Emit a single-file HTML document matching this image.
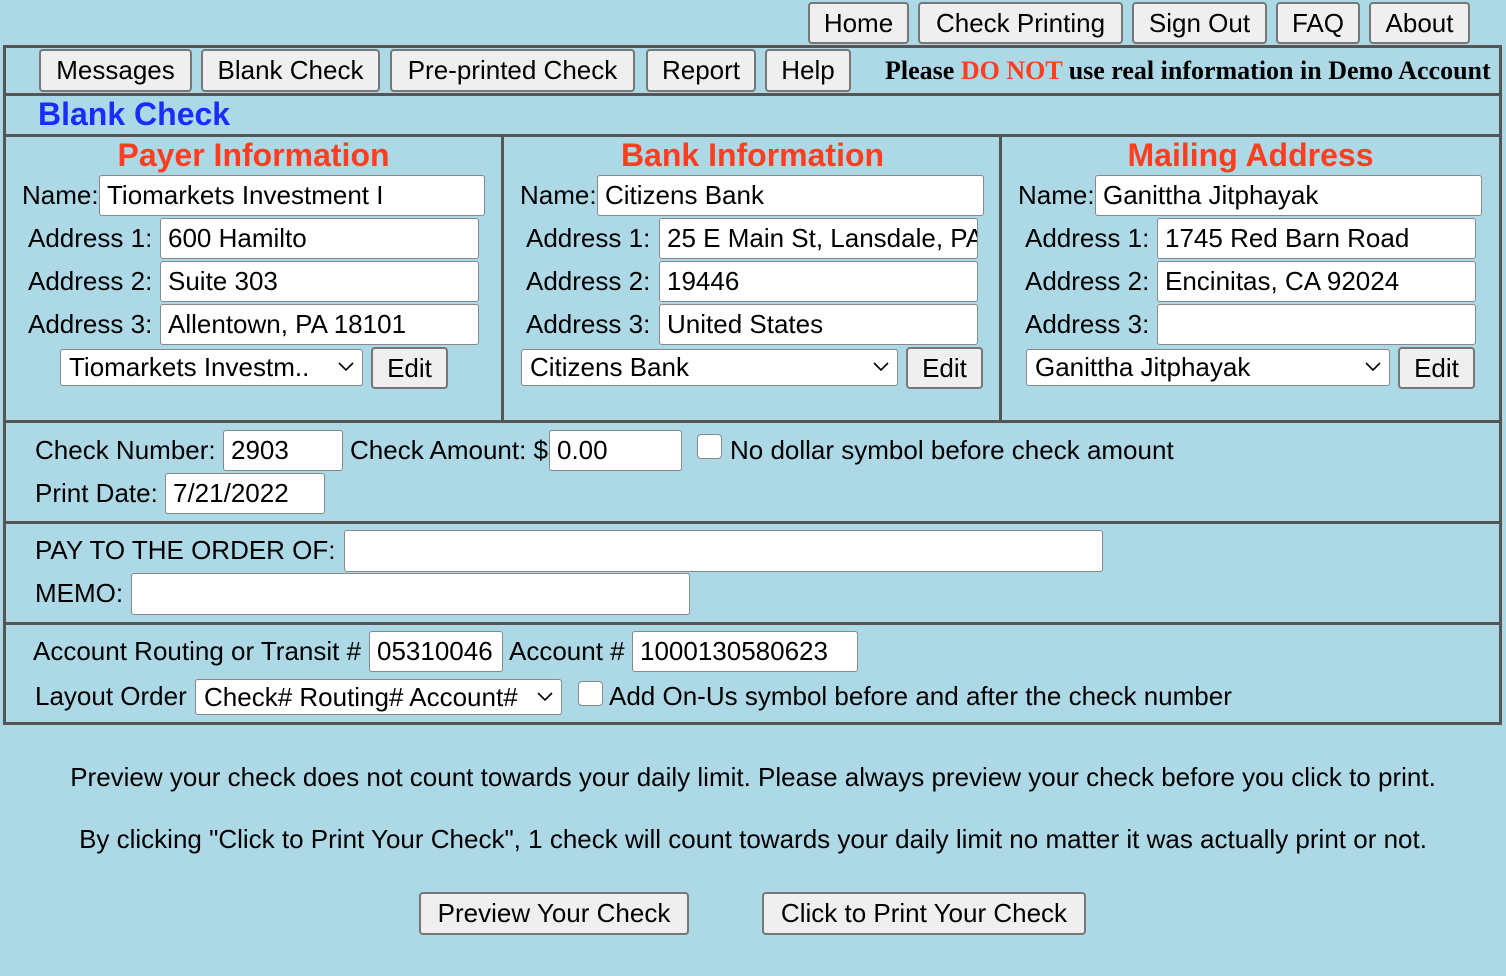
<!DOCTYPE html>
<html><head><meta charset="utf-8"><style>
*{box-sizing:border-box;margin:0;padding:0}
body{width:1506px;height:976px;background:#add8e6;font-family:"Liberation Sans",Arial,sans-serif;font-size:26px;color:#000;position:relative;overflow:hidden}
.a{position:absolute;white-space:nowrap}
.btn{position:absolute;background:#efefef;border:2px solid #777;border-radius:4px;display:flex;align-items:center;justify-content:center;font-size:26px}
.in{position:absolute;background:#fff;border:1px solid #888;border-radius:3px;height:41px;padding-left:7px;line-height:39px;overflow:hidden;white-space:nowrap}
.sel{position:absolute;background:#fff;border:1px solid #888;border-radius:3px;padding-left:8px;line-height:34px;white-space:nowrap;overflow:hidden}
.sel svg{position:absolute;right:8px;top:12px}
.hl{position:absolute;left:3px;width:1499px;height:3px;background:#555}
.vl{position:absolute;top:135px;width:3px;height:287px;background:#555}
.lbl{position:absolute;white-space:nowrap;line-height:41px}
.h{position:absolute;color:#ff3d1f;font-weight:bold;font-size:32px;text-align:center;line-height:34px}
.cb{position:absolute;width:25px;height:25px;background:#fff;border:1px solid #888;border-radius:4px}
</style></head><body>
<div class="btn" style="left:808px;top:2px;width:101px;height:42px">Home</div>
<div class="btn" style="left:918px;top:2px;width:205px;height:42px">Check Printing</div>
<div class="btn" style="left:1132px;top:2px;width:135px;height:42px">Sign Out</div>
<div class="btn" style="left:1276px;top:2px;width:84px;height:42px">FAQ</div>
<div class="btn" style="left:1369px;top:2px;width:101px;height:42px">About</div>

<div class="a" style="left:3px;top:45px;width:1499px;height:680px;border:3px solid #555"></div>
<div class="btn" style="left:39px;top:49px;width:153px;height:43px">Messages</div>
<div class="btn" style="left:201px;top:49px;width:179px;height:43px">Blank Check</div>
<div class="btn" style="left:390px;top:49px;width:245px;height:43px">Pre-printed Check</div>
<div class="btn" style="left:646px;top:49px;width:110px;height:43px">Report</div>
<div class="btn" style="left:765px;top:49px;width:86px;height:43px">Help</div>
<div class="a" style="left:885px;top:56px;font-family:'Liberation Serif',serif;font-weight:bold;font-size:26px;line-height:30px">Please <span style="color:#ff3d1f">DO NOT</span> use real information in Demo Account</div>
<div class="hl" style="top:93px"></div>
<div class="a" style="left:38px;top:97px;color:#1a2dff;font-weight:bold;font-size:32px;line-height:34px">Blank Check</div>
<div class="hl" style="top:134px"></div>
<div class="vl" style="left:501px"></div>
<div class="vl" style="left:999px"></div>

<!-- col1 -->
<div class="h" style="left:5px;top:138px;width:497px">Payer Information</div>
<div class="lbl" style="left:22px;top:175px">Name:</div><div class="in" style="left:99px;top:175px;width:386px">Tiomarkets Investment I</div>
<div class="lbl" style="left:28px;top:218px">Address 1:</div><div class="in" style="left:160px;top:218px;width:319px">600 Hamilto</div>
<div class="lbl" style="left:28px;top:261px">Address 2:</div><div class="in" style="left:160px;top:261px;width:319px">Suite 303</div>
<div class="lbl" style="left:28px;top:304px">Address 3:</div><div class="in" style="left:160px;top:304px;width:319px">Allentown, PA 18101</div>
<div class="sel" style="left:60px;top:349px;width:303px;height:37px">Tiomarkets Investm..<svg width="16" height="10"><path d="M1 1l7 7 7-7" fill="none" stroke="#000" stroke-width="1.6"/></svg></div>
<div class="btn" style="left:371px;top:347px;width:77px;height:42px">Edit</div>

<!-- col2 -->
<div class="h" style="left:504px;top:138px;width:497px">Bank Information</div>
<div class="lbl" style="left:520px;top:175px">Name:</div><div class="in" style="left:597px;top:175px;width:387px">Citizens Bank</div>
<div class="lbl" style="left:526px;top:218px">Address 1:</div><div class="in" style="left:659px;top:218px;width:319px">25 E Main St, Lansdale, PA</div>
<div class="lbl" style="left:526px;top:261px">Address 2:</div><div class="in" style="left:659px;top:261px;width:319px">19446</div>
<div class="lbl" style="left:526px;top:304px">Address 3:</div><div class="in" style="left:659px;top:304px;width:319px">United States</div>
<div class="sel" style="left:521px;top:349px;width:377px;height:37px">Citizens Bank<svg width="16" height="10"><path d="M1 1l7 7 7-7" fill="none" stroke="#000" stroke-width="1.6"/></svg></div>
<div class="btn" style="left:906px;top:347px;width:77px;height:42px">Edit</div>

<!-- col3 -->
<div class="h" style="left:1002px;top:138px;width:497px">Mailing Address</div>
<div class="lbl" style="left:1018px;top:175px">Name:</div><div class="in" style="left:1095px;top:175px;width:387px">Ganittha Jitphayak</div>
<div class="lbl" style="left:1025px;top:218px">Address 1:</div><div class="in" style="left:1157px;top:218px;width:319px">1745 Red Barn Road</div>
<div class="lbl" style="left:1025px;top:261px">Address 2:</div><div class="in" style="left:1157px;top:261px;width:319px">Encinitas, CA 92024</div>
<div class="lbl" style="left:1025px;top:304px">Address 3:</div><div class="in" style="left:1157px;top:304px;width:319px"></div>
<div class="sel" style="left:1026px;top:349px;width:364px;height:37px">Ganittha Jitphayak<svg width="16" height="10"><path d="M1 1l7 7 7-7" fill="none" stroke="#000" stroke-width="1.6"/></svg></div>
<div class="btn" style="left:1398px;top:347px;width:77px;height:42px">Edit</div>

<div class="hl" style="top:420px"></div>
<div class="lbl" style="left:35px;top:430px">Check Number:</div><div class="in" style="left:223px;top:430px;width:120px">2903</div>
<div class="lbl" style="left:350px;top:430px">Check Amount: $</div><div class="in" style="left:549px;top:430px;width:133px">0.00</div>
<div class="cb" style="left:697px;top:434px"></div>
<div class="lbl" style="left:730px;top:430px">No dollar symbol before check amount</div>
<div class="lbl" style="left:35px;top:473px">Print Date:</div><div class="in" style="left:165px;top:473px;width:160px">7/21/2022</div>

<div class="hl" style="top:521px"></div>
<div class="lbl" style="left:35px;top:530px">PAY TO THE ORDER OF:</div><div class="in" style="left:344px;top:530px;width:759px;height:42px"></div>
<div class="lbl" style="left:35px;top:573px">MEMO:</div><div class="in" style="left:131px;top:573px;width:559px;height:42px"></div>

<div class="hl" style="top:622px"></div>
<div class="lbl" style="left:33px;top:631px">Account Routing or Transit #</div><div class="in" style="left:369px;top:631px;width:134px">05310046</div>
<div class="lbl" style="left:509px;top:631px">Account #</div><div class="in" style="left:632px;top:631px;width:226px">1000130580623</div>
<div class="lbl" style="left:35px;top:676px">Layout Order</div>
<div class="sel" style="left:195px;top:679px;width:367px;height:36px">Check# Routing# Account#<svg width="16" height="10"><path d="M1 1l7 7 7-7" fill="none" stroke="#000" stroke-width="1.6"/></svg></div>
<div class="cb" style="left:578px;top:681px"></div>
<div class="lbl" style="left:609px;top:676px">Add On-Us symbol before and after the check number</div>

<div class="a" style="left:0;width:1506px;top:762px;text-align:center;line-height:30px">Preview your check does not count towards your daily limit. Please always preview your check before you click to print.</div>
<div class="a" style="left:0;width:1506px;top:824px;text-align:center;line-height:30px">By clicking "Click to Print Your Check", 1 check will count towards your daily limit no matter it was actually print or not.</div>
<div class="btn" style="left:419px;top:892px;width:270px;height:43px">Preview Your Check</div>
<div class="btn" style="left:762px;top:892px;width:324px;height:43px">Click to Print Your Check</div>
</body></html>
